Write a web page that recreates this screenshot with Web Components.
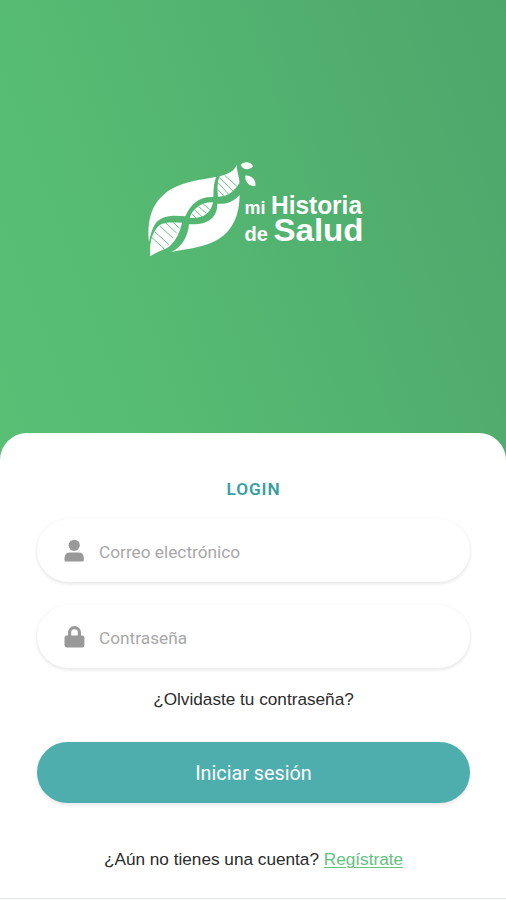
<!DOCTYPE html>
<html lang="es">
<head>
<meta charset="utf-8">
<title>mi Historia de Salud</title>
<style>
html,body{margin:0;height:100%}
body{font-family:"Liberation Sans",Arial,sans-serif;background:#fff}
</style>
</head>
<body>
<login-screen></login-screen>
<script>
const define = (name, html) => customElements.define(name, class extends HTMLElement {
  constructor() {
    super();
    const t = document.createElement('template');
    t.innerHTML = html;
    this.attachShadow({mode: 'open'}).append(t.content.cloneNode(true));
  }
});

define('brand-logo', `
<style>
:host{display:block;width:226px;height:110px}
svg{display:block}
text{font-family:"Liberation Sans",Arial,sans-serif;font-weight:700;fill:#fff}
</style>
<svg width="226" height="110" viewBox="0 0 226 110">
  <g transform="scale(.33333)" fill="#fff">
    <path d="M27 261C20 190 38 138 92 103C134 79 180 75 229 65C221 83 221 103 220 126C180 124 153 145 136 184C104 180 72 180 52 199C37 215 32 239 27 261Z"/>
    <path d="M299 120C298 180 280 224 235 253C194 278 143 281 94 291C128 275 145 240 147 207C188 211 232 198 232 146C261 149 281 139 299 120Z"/>
    <path d="M31 304C27 258 39 228 59 210C77 200 99 203 126 203C119 233 107 262 80 280C62 288 45 294 31 304Z"/>
    <path d="M149 188C160 160 184 141 219 142C214 171 190 194 149 188Z"/>
    <path d="M234 125C231 101 232 80 239 64C262 57 282 50 290 29C290 51 300 70 298 85C283 108 264 126 234 125Z"/>
    <path d="M302 29C310 19 333 18 339 34C330 46 308 46 302 29Z"/>
    <path d="M316 62C333 60 349 74 346 93C328 96 314 81 316 62Z"/>
  </g>
  <g transform="scale(.33333)" stroke="#55b571" stroke-width="2.6" fill="none">
    <path d="M36 248L73 282M45 231L87 269M59 213L99 249M78 205L110 234M99 202L119 220"/>
    <path d="M157 178L169 189M165 166L187 186M176 155L199 175M189 146L209 164"/>
    <path d="M234 104L251 123M235 84L265 117M238 68L279 108M254 61L293 96"/>
  </g>
  <text x="104.5" y="58.5" font-size="17.5" textLength="21" lengthAdjust="spacingAndGlyphs">mi</text>
  <text x="131" y="58.500" font-size="25" textLength="91" lengthAdjust="spacingAndGlyphs">Historia</text>
  <text x="104.5" y="85.5" font-size="19.5" textLength="23.5" lengthAdjust="spacingAndGlyphs">de</text>
  <text x="133.5" y="85.5" font-size="31.5" textLength="90" lengthAdjust="spacingAndGlyphs">Salud</text>
</svg>`);

define('icon-field', `
<style>
:host{display:flex;align-items:center;gap:12px;box-sizing:border-box;height:63px;padding:2px 25px 0;border-radius:32px;background:#fff;
 box-shadow:0 1.5px 3px 1px rgba(0,0,0,.08);color:#a8a8a8;font:17.25px Roboto,sans-serif}
::slotted(svg){display:block;width:25px;height:26px;fill:#999;flex:none;position:relative;top:-1px}
</style><slot name="icon"></slot><span><slot></slot></span>`);

define('pill-button', `
<style>
:host{display:block}
button{display:block;width:100%;height:61px;border:0;border-radius:31px;background:#4eaeae;color:#fff;
 font:19.8px Roboto,sans-serif;padding:2px 0 0;box-shadow:0 2px 4px rgba(0,0,0,.1)}
</style><button><slot></slot></button>`);

define('login-card', `
<style>
:host{display:flex;flex-direction:column;box-sizing:border-box;height:466px;padding:46px 36px 0 37px;background:#fff;border-radius:27px 27px 0 0;border-bottom:1px solid #dfe5df}
h1{margin:0 0 19px;font:600 17.2px/21px Roboto,sans-serif;letter-spacing:.9px;text-align:center;color:#36a0a2}
icon-field+icon-field{margin-top:23px}
p{margin:0;text-align:center;font-size:17.2px;line-height:20px;color:#2b2b2b}
.forgot{margin:21px 0 33px}
.join{margin-top:46px}
a{color:#62c27e;text-decoration:underline;text-underline-offset:2px;text-decoration-thickness:1px}
</style>
<h1>LOGIN</h1>
<icon-field><svg slot="icon" viewBox="0 0 25 26"><circle cx="12.200" cy="7.300" r="5.600"/><path d="M2.500 20.400q0-5.800 5.400-5.800h8.600q5.400 0 5.400 5.800v1.600q0 1.600-1.400 1.600H3.900Q2.500 23.600 2.500 22Z"/></svg>Correo electrónico</icon-field>
<icon-field><svg slot="icon" viewBox="0 0 25 26"><path fill-rule="evenodd" d="M4.500 11.500H6V8.500a6.500 6.500 0 0 1 13 0v3h1.200q2.200 0 2.200 2.200v7.600q0 2.200-2.200 2.200H4.700q-2.200 0-2.200-2.200v-7.600q0-2.200 2-2.200ZM9.200 11.500h6.600V8.500a3.300 3.300 0 0 0-6.600 0Z"/></svg>Contraseña</icon-field>
<p class="forgot">¿Olvidaste tu contraseña?</p>
<pill-button>Iniciar sesión</pill-button>
<p class="join">¿Aún no tienes una cuenta? <a>Regístrate</a></p>`);

define('login-screen', `
<style>
:host{display:flex;flex-direction:column;width:506px;height:900px;overflow:hidden;background:linear-gradient(70deg,#59bf75 0,#57bc73 24%,#52b370 55%,#4fa96c 88%,#4ea76a 100%) 0 0/506px 470px no-repeat #fff}
header{height:433px;flex:none;box-sizing:border-box;padding:155px 0 0 140px}
</style>
<header><brand-logo></brand-logo></header>
<login-card></login-card>`);
</script>
</body>
</html>
